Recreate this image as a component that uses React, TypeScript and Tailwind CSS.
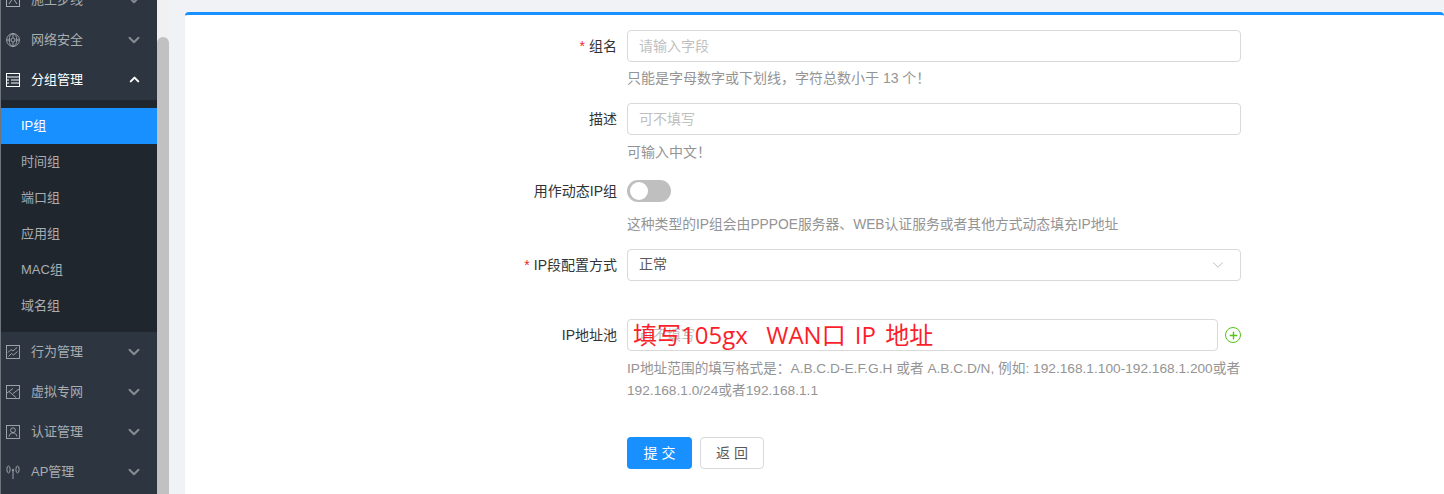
import { ChevronDown, ChevronUp, Plus } from "lucide-react";
import type { ReactNode } from "react";

const fontStack = "font-['Liberation_Sans','Noto_Sans_CJK_SC',sans-serif]";

function IconRoute() {
  return (
    <svg viewBox="0 0 14 14" className="h-[14px] w-[14px]" fill="none" stroke="currentColor">
      <rect x="0.5" y="0.5" width="13" height="13" />
      <path d="M3 11 7 5l4 6" />
    </svg>
  );
}

function IconGlobe() {
  return (
    <svg viewBox="0 0 14 14" className="h-[14px] w-[14px]" fill="none" stroke="currentColor" strokeWidth="0.9">
      <circle cx="7" cy="7" r="6.4" />
      <circle cx="7" cy="7" r="2" />
      <ellipse cx="7" cy="7" rx="3.8" ry="6.4" />
      <path d="M0.8 7h3.6M9.600 7h3.600M7 .6v4M7 9.400v4" />
    </svg>
  );
}

function IconGroup() {
  return (
    <svg viewBox="0 0 14 14" className="h-[14px] w-[14px]" fill="none" stroke="currentColor">
      <rect x="0.5" y="0.5" width="13" height="13" />
      <path d="M1 4h12M3 7H1M5 7h8M3 10H1M5 10h8" />
    </svg>
  );
}

function IconTrend() {
  return (
    <svg viewBox="0 0 14 14" className="h-[14px] w-[14px]" fill="none" stroke="currentColor" strokeWidth="0.9">
      <rect x="0.5" y="0.5" width="13" height="13" />
      <path d="M2 7.500 5 4.500l2 1.500 4-3.500M2.500 11.500l3-3 2 1.500 4-3.500" />
    </svg>
  );
}

function IconVpn() {
  return (
    <svg viewBox="0 0 14 14" className="h-[14px] w-[14px]" fill="none" stroke="currentColor" strokeWidth="0.9">
      <rect x="0.5" y="0.5" width="13" height="13" />
      <path d="M1 8 7 3.500M7 8.500l6-4.500M3 6.500l7 6" />
    </svg>
  );
}

function IconUser() {
  return (
    <svg viewBox="0 0 14 14" className="h-[14px] w-[14px]" fill="none" stroke="currentColor" strokeWidth="0.9">
      <rect x="0.5" y="0.5" width="13" height="13" />
      <circle cx="7" cy="5.200" r="2.400" />
      <path d="M3 11.500c.4-2.400 2-3.600 4-3.600s3.600 1.200 4 3.600" />
    </svg>
  );
}

function IconAp() {
  return (
    <svg viewBox="0 0 14 14" className="h-[14px] w-[14px]" fill="none" stroke="currentColor" strokeWidth="0.9">
      <path d="M7 5v9" />
      <circle cx="7" cy="5" r="0.8" />
      <ellipse cx="2.500" cy="4.500" rx="1.600" ry="3.500" />
      <ellipse cx="11.500" cy="4.500" rx="1.600" ry="3.500" />
    </svg>
  );
}

function MenuItem({ icon, label, open }: { icon: ReactNode; label: string; open?: boolean }) {
  return (
    <div className={`flex h-10 items-center pb-px pl-[5px] pr-[14px] text-[13px] ${open ? "text-white" : "text-[#a9adb2]"}`}>
      <span className="flex w-[25px] shrink-0 items-center">{icon}</span>
      <span className="flex-1">{label}</span>
      {open ? (
        <span className="flex w-[18px] justify-center">
          <ChevronUp size={15} strokeWidth={3.2} />
        </span>
      ) : (
        <ChevronDown size={18} strokeWidth={2.6} className="text-[#878c92]" />
      )}
    </div>
  );
}

function SubItem({ label, active }: { label: string; active?: boolean }) {
  return (
    <div className={`flex h-9 items-center pl-[20px] text-[13px] ${active ? "bg-[#1890ff] text-white" : "text-[#a9adb2]"}`}>
      {label}
    </div>
  );
}

function Row({ label, required, children, className }: { label?: string; required?: boolean; children: ReactNode; className?: string }) {
  return (
    <div className={`flex ${className ?? ""}`}>
      <div className="flex h-8 w-[432px] items-center justify-end text-[14px] text-[#333]">
        {required ? <span className="mr-1 text-[14px] text-[#f5222d]">*</span> : null}
        {label}
      </div>
      <div className="ml-[10px] w-[614px]">{children}</div>
    </div>
  );
}

function TextBox({ placeholder }: { placeholder: string }) {
  return (
    <div className="flex h-8 items-center rounded border border-[#d9d9d9] bg-white px-[11px] text-[14px] text-[#bfbfbf]">
      {placeholder}
    </div>
  );
}

function Help({ children, className }: { children: ReactNode; className?: string }) {
  return <div className={`whitespace-nowrap leading-[22px] text-[#949494] ${className ?? "text-[14px]"}`}>{children}</div>;
}

export default function App() {
  return (
    <div className={`flex h-[494px] w-[1444px] overflow-hidden bg-[#f0f2f5] ${fontStack}`}>
      <aside className="h-full w-[157px] shrink-0 overflow-hidden border-l border-[#6f747a] bg-[#2d3540]">
        <div className="-mt-[20px]">
          <MenuItem icon={<IconRoute />} label="施工步线" />
          <MenuItem icon={<IconGlobe />} label="网络安全" />
          <MenuItem icon={<IconGroup />} label="分组管理" open />
          <div className="bg-[#20262d] py-2">
            <SubItem label="IP组" active />
            <SubItem label="时间组" />
            <SubItem label="端口组" />
            <SubItem label="应用组" />
            <SubItem label="MAC组" />
            <SubItem label="域名组" />
          </div>
          <MenuItem icon={<IconTrend />} label="行为管理" />
          <MenuItem icon={<IconVpn />} label="虚拟专网" />
          <MenuItem icon={<IconUser />} label="认证管理" />
          <MenuItem icon={<IconAp />} label="AP管理" />
        </div>
      </aside>

      <div className="h-full w-3 shrink-0 bg-[#f1f1f1] pt-[37px]">
        <div className="h-full rounded-t-md bg-[#c1c1c1]" />
      </div>

      <main className="ml-4 mt-3 flex-1 rounded-t border-t-[3px] border-[#1890ff] bg-white pt-[15px]">
        <Row label="组名" required>
          <TextBox placeholder="请输入字段" />
          <div className="mt-[5px]">
            <Help>只能是字母数字或下划线，字符总数小于 13 个！</Help>
          </div>
        </Row>
        <Row label="描述" className="mt-[14px]">
          <TextBox placeholder="可不填写" />
          <div className="mt-[6px]">
            <Help>可输入中文！</Help>
          </div>
        </Row>
        <Row label="用作动态IP组" className="mt-[12px] -mb-px">
          <div className="flex h-8 items-center">
            <div className="flex h-[22px] w-11 items-center rounded-full bg-[#bfbfbf] pl-[3px]">
              <div className="h-[18px] w-[18px] rounded-full bg-white" />
            </div>
          </div>
          <div className="mt-[7px]">
            <Help className="text-[13.8px]">这种类型的IP组会由PPPOE服务器、WEB认证服务或者其他方式动态填充IP地址</Help>
          </div>
        </Row>
        <Row label="IP段配置方式" required className="mt-[14px]">
          <div className="flex h-8 items-center justify-between rounded border border-[#d9d9d9] bg-white pl-[11px] pr-[13px] text-[14px] text-[#595959]">
            <span className="pb-[2px]">正常</span>
            <ChevronDown size={18} strokeWidth={1} className="text-[#a6a6a6]" />
          </div>
        </Row>
        <Row label="IP地址池" className="mt-[38px]">
          <div className="flex items-center">
            <div className="relative w-[591px]">
              <TextBox placeholder="可不填写" />
              <div className="absolute left-[6px] top-[-2px] whitespace-pre font-['Open_Sans','Noto_Sans_CJK_SC',sans-serif] text-[24px] leading-[36px] text-[#fb1f2b] [word-spacing:3px]">
                填写105gx  WAN口 IP 地址
              </div>
            </div>
            <div className="ml-[7px] flex h-4 w-4 items-center justify-center rounded-full border-[1.5px] border-[#52c41a] text-[#52c41a]">
              <Plus size={11} strokeWidth={3} />
            </div>
          </div>
          <div className="mt-[7px]">
            <Help className="text-[13.7px]">
              IP地址范围的填写格式是：A.B.C.D-E.F.G.H 或者 A.B.C.D/N, 例如: 192.168.1.100-192.168.1.200或者
              <br />
              192.168.1.0/24或者192.168.1.1
            </Help>
          </div>
        </Row>
        <div className="ml-[442px] mt-[35px] flex gap-2">
          <button type="button" className="h-8 w-[65px] rounded bg-[#1890ff] text-[14px] text-white">提 交</button>
          <button type="button" className="h-8 w-16 rounded border border-[#d9d9d9] bg-white text-[14px] text-[#595959]">返 回</button>
        </div>
      </main>
    </div>
  );
}
